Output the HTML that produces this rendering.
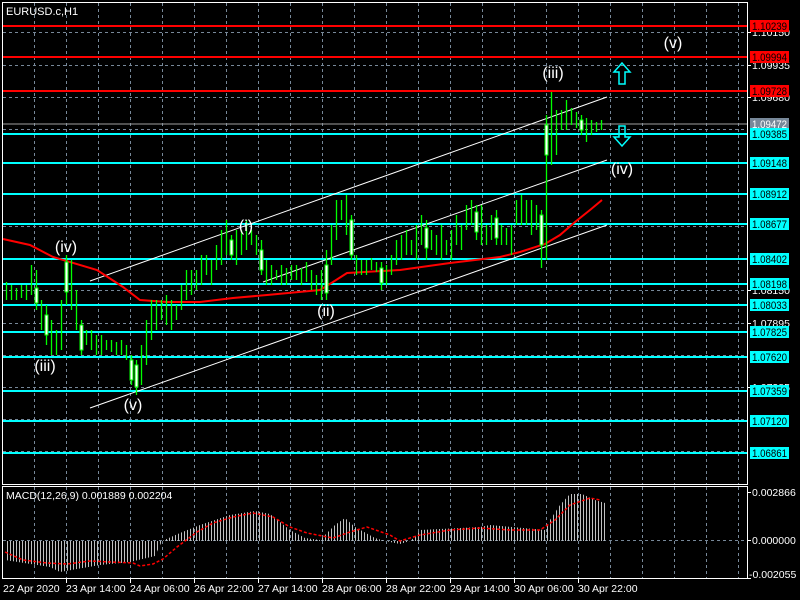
<!DOCTYPE html>
<html><head><meta charset="utf-8"><style>
html,body{margin:0;padding:0;background:#000;}
svg{display:block;font-family:"Liberation Sans",sans-serif;}
</style></head><body>
<svg width="800" height="600" viewBox="0 0 800 600" xmlns="http://www.w3.org/2000/svg">
<defs>
<pattern id="st" x="0" y="0" width="3" height="10" patternUnits="userSpaceOnUse">
<rect x="1" y="0" width="1" height="10" fill="#c0c0c0"/>
</pattern>
</defs>
<rect width="800" height="600" fill="#000"/>
<g stroke="#778899" stroke-width="1" stroke-dasharray="3,3" fill="none">
<path d="M34.5 3V484M66.5 3V484M98.5 3V484M130.5 3V484M162.5 3V484M194.5 3V484M226.5 3V484M258.5 3V484M290.5 3V484M322.5 3V484M354.5 3V484M386.5 3V484M418.5 3V484M450.5 3V484M482.5 3V484M514.5 3V484M546.5 3V484M578.5 3V484M610.5 3V484M642.5 3V484M674.5 3V484M706.5 3V484M738.5 3V484"/>
<path d="M34.5 487V579M66.5 487V579M98.5 487V579M130.5 487V579M162.5 487V579M194.5 487V579M226.5 487V579M258.5 487V579M290.5 487V579M322.5 487V579M354.5 487V579M386.5 487V579M418.5 487V579M450.5 487V579M482.5 487V579M514.5 487V579M546.5 487V579M578.5 487V579M610.5 487V579M642.5 487V579M674.5 487V579M706.5 487V579M738.5 487V579"/>
<path d="M3 32.5H747M3 65.5H747M3 97.5H747M3 129.5H747M3 162.5H747M3 194.5H747M3 226.5H747M3 258.5H747M3 290.5H747M3 323.5H747M3 355.5H747M3 387.5H747M3 419.5H747M3 451.5H747"/>
<path d="M3 540.5H747"/>
</g>
<g stroke-width="2">
<path d="M3 26H747M3 57H747M3 91H747" stroke="#ff0000"/>
<path d="M3 134H747M3 163H747M3 194H747M3 224H747M3 259H747M3 284H747M3 305H747M3 332H747M3 357H747M3 391H747M3 421H747M3 453H747" stroke="#00ffff"/>
</g>
<path d="M3 124H747" stroke="#a0a0a0" stroke-width="1"/>
<g stroke="#fff" stroke-width="1">
<path d="M90 281L607 97M263 282L607 160M90 408L607 225"/>
</g>
<polyline fill="none" stroke="#ff0000" stroke-width="2" points="3,239 30,245 53,257 97,270 123,287 140,300 167,302 200,302 233,298 267,295 320,290 333,282 347,273 400,270 450,263 500,257 520,252 545,244 560,235 575,222 590,210 602,200"/>
<path stroke="#00ff00" stroke-width="1.3" fill="none" d="M6.5 282V300M11.5 285V300M16.5 288V300M21.5 285V298M26.5 285V300M31.5 265V295M36.5 270V310M41.5 300V330M46.5 305V345M51.5 320V355M56.5 330V355M61.5 300V350M66.5 255V305M71.5 260V310M76.5 290V330M81.5 320V355M86.5 330V345M91.5 330V350M96.5 335V355M101.5 335V355M106.5 340V350M111.5 340V352M116.5 342V355M121.5 340V355M126.5 345V360M131.5 355V385M136.5 360V395M141.5 345V385M146.5 320V365M151.5 300V340M156.5 300V330M161.5 300V320M166.5 295V325M171.5 300V330M176.5 305V320M181.5 285V310M186.5 270V300M191.5 270V295M196.5 270V290M201.5 255V285M206.5 255V275M211.5 260V285M216.5 245V270M221.5 230V265M226.5 220V255M231.5 235V260M236.5 230V265M241.5 230V255M246.5 220V250M251.5 230V245M256.5 235V255M261.5 240V275M266.5 260V285M271.5 265V285M276.5 270V280M281.5 265V285M286.5 268V285M291.5 265V280M296.5 265V280M301.5 268V285M306.5 262V282M311.5 270V290M316.5 275V295M321.5 270V300M326.5 250V300M331.5 225V265M336.5 200V240M341.5 200V220M346.5 195V235M351.5 215V260M356.5 255V275M361.5 260V275M366.5 260V275M371.5 258V270M376.5 262V272M381.5 262V290M386.5 265V285M391.5 255V275M396.5 240V265M401.5 235V260M406.5 230V255M411.5 240V255M416.5 225V260M421.5 215V245M426.5 220V260M431.5 230V250M436.5 235V255M441.5 225V260M446.5 240V255M451.5 230V260M456.5 215V245M461.5 225V250M466.5 205V230M471.5 200V225M476.5 205V240M481.5 205V245M486.5 225V245M491.5 215V240M496.5 210V245M501.5 225V245M506.5 228V245M511.5 225V255M516.5 200V225M521.5 195V225M526.5 200V225M531.5 200V235M536.5 205V230M541.5 210V268M546.5 115V260M551.5 92V165M556.5 110V155M561.5 110V130M566.5 100V130M571.5 108V125M576.5 112V128M581.5 115V135M586.5 118V142M591.5 120V135M596.5 122V132M601.5 120V130"/>
<g fill="#fff" stroke="#00ff00" stroke-width="1">
<rect x="35" y="288" width="3" height="15"/><rect x="45" y="315" width="3" height="20"/><rect x="65" y="262" width="3" height="30"/><rect x="80" y="325" width="3" height="25"/><rect x="130" y="360" width="3" height="20"/><rect x="135" y="365" width="3" height="22"/><rect x="230" y="240" width="3" height="15"/><rect x="260" y="250" width="3" height="20"/><rect x="325" y="265" width="3" height="28"/><rect x="350" y="220" width="3" height="35"/><rect x="380" y="268" width="3" height="15"/><rect x="425" y="228" width="3" height="20"/><rect x="475" y="212" width="3" height="20"/><rect x="495" y="218" width="3" height="20"/><rect x="545" y="125" width="3" height="30"/><rect x="540" y="215" width="3" height="30"/><rect x="580" y="120" width="3" height="10"/></g>
<g fill="#fff" font-size="16" text-anchor="middle">
<text x="66" y="252">(iv)</text><text x="45" y="371">(iii)</text><text x="133" y="410">(v)</text><text x="246" y="231">(i)</text><text x="326" y="316">(ii)</text><text x="553" y="78">(iii)</text><text x="673" y="48">(v)</text><text x="622" y="174">(iv)</text>
</g>
<g fill="none" stroke="#00ffff" stroke-width="1.5">
<path d="M622 63L614 72H619V84H625V72H630Z"/>
<path d="M622 146L614 137H619V126H625V137H630Z"/>
</g>
<polygon fill="url(#st)" points="5,541 5,560 50,567 60,572 100,565 130,562 155,556 162,541"/>
<polygon fill="url(#st)" points="162,541 180,533 200,525 230,515 255,511 270,514 290,530 305,538 320,540 335,525 345,518 355,527 375,538 385,541 400,544 410,541 415,537 420,530 480,527 490,525 545,530 550,520 560,505 570,494 582,494 595,500 605,503 605,541"/>
<polyline fill="none" stroke="#ff0000" stroke-width="1.5" stroke-dasharray="3,2" points="5,552 23,560 47,563 67,564 90,561 133,563 140,566 153,564 163,559 177,547 197,532 213,523 233,517 253,513 273,517 290,527 307,533 333,538 350,532 367,527 390,535 400,541 420,535 450,530 480,528 510,530 540,530 555,520 570,505 590,498 600,500"/>
<g fill="none" stroke="#fff" stroke-width="1">
<rect x="2.5" y="2.5" width="745" height="482"/>
<rect x="2.5" y="486.5" width="745" height="92"/>
</g>
<text x="6" y="15" fill="#fff" font-size="11">EURUSD.c,H1</text>
<text x="6" y="499" fill="#fff" font-size="10.5">MACD(12,26,9) 0.001889 0.002204</text>
<g fill="#fff" font-size="10.5">
<text x="752" y="36">1.10150</text><text x="752" y="69">1.09935</text><text x="752" y="101">1.09680</text><text x="752" y="294">1.08150</text><text x="752" y="327">1.07895</text><text x="752" y="391">1.07385</text>
<text x="752" y="496">0.002866</text><text x="752" y="544">0.000000</text><text x="749" y="578">-0.002055</text>
</g>
<path stroke="#fff" d="M747 32.5H751M747 65.5H751M747 97.5H751M747 290.5H751M747 323.5H751M747 387.5H751M747 492.5H751M747 540.5H751M747 578.5H751"/>
<g font-size="11">
<rect x="750" y="20" width="39" height="12" fill="#ff0000"/><text x="752" y="30" fill="#000" textLength="35" lengthAdjust="spacingAndGlyphs">1.10239</text>
<rect x="750" y="51" width="39" height="12" fill="#ff0000"/><text x="752" y="61" fill="#000" textLength="35" lengthAdjust="spacingAndGlyphs">1.09994</text>
<rect x="750" y="85" width="39" height="12" fill="#ff0000"/><text x="752" y="95" fill="#000" textLength="35" lengthAdjust="spacingAndGlyphs">1.09728</text>
<rect x="750" y="118" width="39" height="12" fill="#778899"/><text x="752" y="128" fill="#fff" textLength="35" lengthAdjust="spacingAndGlyphs">1.09472</text>
<g fill="#00ffff"><rect x="750" y="128" width="39" height="12"/><rect x="750" y="157" width="39" height="12"/><rect x="750" y="188" width="39" height="12"/><rect x="750" y="218" width="39" height="12"/><rect x="750" y="253" width="39" height="12"/><rect x="750" y="278" width="39" height="12"/><rect x="750" y="299" width="39" height="12"/><rect x="750" y="326" width="39" height="12"/><rect x="750" y="351" width="39" height="12"/><rect x="750" y="385" width="39" height="12"/><rect x="750" y="415" width="39" height="12"/><rect x="750" y="447" width="39" height="12"/></g>
<g fill="#000"><text x="752" y="138" textLength="35" lengthAdjust="spacingAndGlyphs">1.09385</text><text x="752" y="167" textLength="35" lengthAdjust="spacingAndGlyphs">1.09148</text><text x="752" y="198" textLength="35" lengthAdjust="spacingAndGlyphs">1.08912</text><text x="752" y="228" textLength="35" lengthAdjust="spacingAndGlyphs">1.08677</text><text x="752" y="263" textLength="35" lengthAdjust="spacingAndGlyphs">1.08402</text><text x="752" y="288" textLength="35" lengthAdjust="spacingAndGlyphs">1.08198</text><text x="752" y="309" textLength="35" lengthAdjust="spacingAndGlyphs">1.08033</text><text x="752" y="336" textLength="35" lengthAdjust="spacingAndGlyphs">1.07825</text><text x="752" y="361" textLength="35" lengthAdjust="spacingAndGlyphs">1.07620</text><text x="752" y="395" textLength="35" lengthAdjust="spacingAndGlyphs">1.07359</text><text x="752" y="425" textLength="35" lengthAdjust="spacingAndGlyphs">1.07120</text><text x="752" y="457" textLength="35" lengthAdjust="spacingAndGlyphs">1.06861</text></g>
</g>
<path stroke="#fff" d="M66.5 579V583M130.5 579V583M194.5 579V583M258.5 579V583M322.5 579V583M386.5 579V583M450.5 579V583M514.5 579V583M578.5 579V583"/>
<g fill="#fff" font-size="10.5">
<text x="3" y="592">22 Apr 2020</text><text x="66" y="592">23 Apr 14:00</text><text x="130" y="592">24 Apr 06:00</text><text x="194" y="592">26 Apr 22:00</text><text x="258" y="592">27 Apr 14:00</text><text x="322" y="592">28 Apr 06:00</text><text x="386" y="592">28 Apr 22:00</text><text x="450" y="592">29 Apr 14:00</text><text x="514" y="592">30 Apr 06:00</text><text x="578" y="592">30 Apr 22:00</text>
</g>
</svg>
</body></html>
